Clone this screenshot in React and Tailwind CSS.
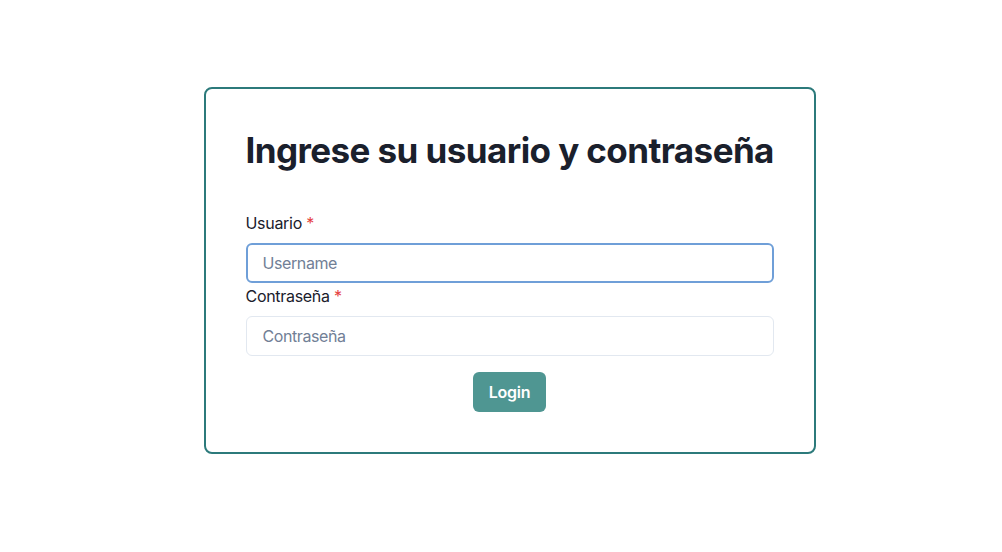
export default function App() {
  return (
    <div className="w-[1002px] h-[552px] bg-white flex items-start justify-center pt-[87px] pl-[17px]" style={{ fontFamily: "Inter, 'Noto Sans', sans-serif" }}>
      <div className="w-[612px] border-2 border-[#2c7a7b] rounded-lg p-10 flex flex-col">
        <h1 className="text-[35px] leading-[43px] font-bold text-[#1a202c] tracking-[-0.58px] whitespace-nowrap">Ingrese su usuario y contraseña</h1>
        <div className="mt-[39px] flex flex-col">
          <label className="text-base leading-6 font-normal text-[#1a202c] mb-2 tracking-[-0.3px]">
            Usuario <span className="text-[#e53e3e]">*</span>
          </label>
          <input
            placeholder="Username"
            className="h-10 w-full rounded-md border-2 border-[#6f9fd8] px-[15px] text-base tracking-[-0.4px] text-[#1a202c] placeholder:text-[#718096] outline-none"
          />
          <label className="mt-px text-base leading-6 font-normal text-[#1a202c] mb-2 tracking-[-0.3px]">
            Contraseña <span className="text-[#e53e3e]">*</span>
          </label>
          <input
            placeholder="Contraseña"
            type="password"
            className="h-10 w-full rounded-md border border-[#e2e8f0] px-4 text-base tracking-[-0.4px] text-[#1a202c] placeholder:text-[#718096] outline-none"
          />
          <div className="mt-4 flex justify-center">
            <button className="h-10 w-[73px] rounded-md bg-[#4f9692] text-white font-semibold text-base tracking-[-0.3px]">Login</button>
          </div>
        </div>
      </div>
    </div>
  );
}
